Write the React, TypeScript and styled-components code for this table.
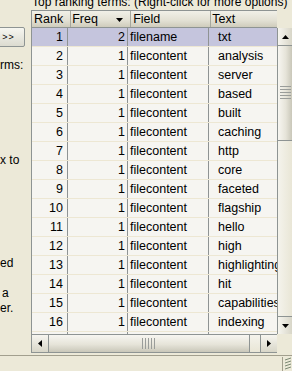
import React from 'react'
import styled, { createGlobalStyle } from 'styled-components'

const GlobalStyle = createGlobalStyle`
  html, body { margin: 0; padding: 0; background: #ece9d8; }
  body {
    font-family: 'Liberation Sans', Arial, sans-serif;
    font-size: 12px;
    color: #000;
  }
`

const line = '#8e9493'

const Page = styled.div`
  width: 292px;
  height: 371px;
  overflow: hidden;
  display: grid;
  grid-template-columns: 31px 261px;
  grid-template-rows: 353px 18px;
  background: #ece9d8;
`

const Side = styled.div`
  overflow: hidden;
  display: flex;
  flex-direction: column;
  align-items: flex-start;
`

const SideButton = styled.div`
  margin-top: 27px;
  margin-left: -4px;
  width: 29px;
  height: 20px;
  box-sizing: border-box;
  border: 1px solid ${line};
  border-radius: 2px;
  background: linear-gradient(#f6f6f1, #dcdbd0);
  display: flex;
  align-items: center;
  justify-content: center;
  font-size: 9px;
  letter-spacing: 1px;
  padding-right: 4px;
`

const SideLine = styled.div<{ $gap: number; $indent?: number }>`
  margin-top: ${(p) => p.$gap}px;
  padding-left: ${(p) => p.$indent || 0}px;
  line-height: 15px;
  white-space: nowrap;
`

const Main = styled.div`
  display: flex;
  flex-direction: column;
  overflow: hidden;
`

const Caption = styled.div`
  height: 10px;
  overflow: hidden;
  padding-left: 1px;
  & > span {
    display: block;
    margin-top: -5px;
    line-height: 14px;
    white-space: nowrap;
  }
`

const Frame = styled.div`
  display: grid;
  grid-template-columns: 246px 15px;
  grid-template-rows: 18px 306px 19px;
  font-size: 12.5px;
`

const HeaderView = styled.div`
  display: flex;
  overflow: hidden;
  box-sizing: border-box;
  border: 1px solid ${line};
  border-right: none;
  background: linear-gradient(#f1f0e8, #e2e0d3 60%, #cfccbc);
`

const HeaderCell = styled.div<{ $w: number; $pad?: number }>`
  flex: 0 0 ${(p) => p.$w}px;
  box-sizing: border-box;
  border-right: 1px solid #a6a89e;
  padding: 1px 7px 0 ${(p) => p.$pad ?? 2}px;
  line-height: 15px;
  display: flex;
  align-items: center;
  justify-content: space-between;
  white-space: nowrap;
`

const SortArrow = styled.svg`
  width: 7px;
  height: 4px;
  margin-top: 1px;
`

const Body = styled.div`
  overflow: hidden;
  border-left: 1px solid ${line};
  background: #f6f5f1;
`

const Row = styled.div<{ $selected?: boolean }>`
  display: flex;
  height: 19px;
  box-sizing: border-box;
  border-bottom: 1px solid #ede7d3;
  background: ${(p) => (p.$selected ? '#c5c5dd' : '#f6f5f1')};
`

const Cell = styled.div<{ $w: number; $right?: boolean; $pl?: number; $pr?: number }>`
  flex: 0 0 ${(p) => p.$w}px;
  box-sizing: border-box;
  border-right: 1px solid #8f9393;
  text-align: ${(p) => (p.$right ? 'right' : 'left')};
  padding: 1px ${(p) => p.$pr ?? 0}px 0 ${(p) => p.$pl ?? 0}px;
  line-height: 17px;
  white-space: nowrap;
  overflow: hidden;
`

const VScroll = styled.div`
  display: flex;
  flex-direction: column;
  border-left: 1px solid ${line};
  background: linear-gradient(90deg, #f4f3ec, #e9e6d6);
  overflow: hidden;
`

const HScroll = styled.div`
  display: flex;
  box-sizing: border-box;
  border: 1px solid ${line};
  border-right: none;
  background: linear-gradient(#f4f3ec, #e9e6d6);
`

const ArrowButton = styled.div<{ $horizontal?: boolean }>`
  flex: 0 0 ${(p) => (p.$horizontal ? 17 : 18)}px;
  box-sizing: border-box;
  display: flex;
  align-items: center;
  justify-content: center;
  background: ${(p) =>
    p.$horizontal
      ? 'linear-gradient(#f6f5ef, #d8d6c8)'
      : 'linear-gradient(90deg, #f6f5ef, #d8d6c8)'};
  border-${(p) => (p.$horizontal ? 'right' : 'bottom')}: 1px solid ${line};
`

const ArrowButtonEnd = styled(ArrowButton)`
  border: none;
  border-${(p) => (p.$horizontal ? 'left' : 'top')}: 1px solid ${line};
`

const Thumb = styled.div<{ $horizontal?: boolean; $size: number }>`
  flex: 0 0 ${(p) => p.$size}px;
  box-sizing: border-box;
  display: flex;
  align-items: center;
  justify-content: center;
  background: ${(p) =>
    p.$horizontal
      ? 'linear-gradient(#f7f6f1, #e6e4d9 55%, #c9c7b9)'
      : 'linear-gradient(90deg, #f7f6f1, #e6e4d9 55%, #c9c7b9)'};
  border-${(p) => (p.$horizontal ? 'right' : 'bottom')}: 1px solid ${line};
`

const Grip = styled.div<{ $horizontal?: boolean }>`
  width: ${(p) => (p.$horizontal ? 14 : 11)}px;
  height: ${(p) => (p.$horizontal ? 11 : 14)}px;
  background: ${(p) =>
    p.$horizontal
      ? 'repeating-linear-gradient(90deg, #9a9d9a 0 1px, transparent 1px 3px)'
      : 'repeating-linear-gradient(#9a9d9a 0 1px, transparent 1px 3px)'};
`

const Track = styled.div`
  flex: 1;
`

const Corner = styled.div`
  background: #ece9d8;
`

const Status = styled.div`
  grid-column: 1 / span 2;
  margin-top: 2px;
  border-top: 1px solid #a29f8e;
  display: flex;
  justify-content: flex-end;
  align-items: stretch;
`

const StatusDivider = styled.div`
  width: 1px;
  margin: 1px 1px 0 0;
  background: #a29f8e;
`

const ResizeGrip = styled.svg`
  width: 8px;
  height: 14px;
  margin-top: 1px;
`

const Triangle = ({ dir }: { dir: 'up' | 'down' | 'left' | 'right' }) => {
  const pts = {
    up: '0,4 7,4 3.5,0',
    down: '0,0 7,0 3.5,4',
    left: '4,0 4,7 0,3.5',
    right: '0,0 0,7 4,3.5',
  }[dir]
  const vertical = dir === 'up' || dir === 'down'
  return (
    <svg width={vertical ? 7 : 4} height={vertical ? 4 : 7} viewBox={vertical ? '0 0 7 4' : '0 0 4 7'}>
      <polygon points={pts} fill="#000" />
    </svg>
  )
}

const rows: [number, number, string, string][] = [
  [1, 2, 'filename', 'txt'],
  [2, 1, 'filecontent', 'analysis'],
  [3, 1, 'filecontent', 'server'],
  [4, 1, 'filecontent', 'based'],
  [5, 1, 'filecontent', 'built'],
  [6, 1, 'filecontent', 'caching'],
  [7, 1, 'filecontent', 'http'],
  [8, 1, 'filecontent', 'core'],
  [9, 1, 'filecontent', 'faceted'],
  [10, 1, 'filecontent', 'flagship'],
  [11, 1, 'filecontent', 'hello'],
  [12, 1, 'filecontent', 'high'],
  [13, 1, 'filecontent', 'highlighting'],
  [14, 1, 'filecontent', 'hit'],
  [15, 1, 'filecontent', 'capabilities'],
  [16, 1, 'filecontent', 'indexing'],
  [17, 1, 'filecontent', 'java'],
]

export default function App() {
  return (
    <>
      <GlobalStyle />
      <Page>
        <Side>
          <SideButton>&gt;&gt;</SideButton>
          <SideLine $gap={11}>rms:</SideLine>
          <SideLine $gap={80}>x to</SideLine>
          <SideLine $gap={88}>ed</SideLine>
          <SideLine $gap={15} $indent={2}>a</SideLine>
          <SideLine $gap={0}>er.</SideLine>
        </Side>
        <Main>
          <Caption>
            <span>Top ranking terms: (Right-click for more options)</span>
          </Caption>
          <Frame>
            <HeaderView>
              <HeaderCell $w={36}>Rank</HeaderCell>
              <HeaderCell $w={60} $pad={1}>
                Freq
                <SortArrow viewBox="0 0 7 4">
                  <polygon points="0,0 7,0 3.5,4" fill="#000" />
                </SortArrow>
              </HeaderCell>
              <HeaderCell $w={80} $pad={2}>Field</HeaderCell>
              <HeaderCell $w={100} $pad={1}>Text</HeaderCell>
            </HeaderView>
            <Corner />
            <Body>
              {rows.map(([rank, freq, field, text]) => (
                <Row key={rank} $selected={rank === 1}>
                  <Cell $w={36} $right $pr={4}>{rank}</Cell>
                  <Cell $w={60} $right $pr={2}>{freq}</Cell>
                  <Cell $w={81} $pl={2}>{field}</Cell>
                  <Cell $w={100} $pl={9}>{text}</Cell>
                </Row>
              ))}
            </Body>
            <VScroll>
              <ArrowButton>
                <Triangle dir="up" />
              </ArrowButton>
              <Thumb $size={95}>
                <Grip />
              </Thumb>
              <Track />
              <ArrowButtonEnd>
                <Triangle dir="down" />
              </ArrowButtonEnd>
            </VScroll>
            <HScroll>
              <ArrowButton $horizontal>
                <Triangle dir="left" />
              </ArrowButton>
              <Thumb $horizontal $size={201}>
                <Grip $horizontal />
              </Thumb>
              <Track />
              <ArrowButtonEnd $horizontal>
                <Triangle dir="right" />
              </ArrowButtonEnd>
            </HScroll>
            <Corner />
          </Frame>
        </Main>
        <Status>
          <StatusDivider />
          <ResizeGrip viewBox="0 0 8 14">
            <path d="M1 3 L7 1 M1 6 L7 4 M1 9 L7 7 M1 12 L7 10" stroke="#7c8a74" strokeWidth="1" fill="none" />
          </ResizeGrip>
        </Status>
      </Page>
    </>
  )
}
